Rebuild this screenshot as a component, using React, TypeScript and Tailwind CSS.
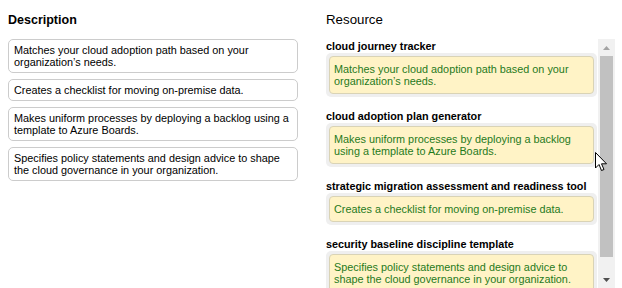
const descriptions = [
  "Matches your cloud adoption path based on your organization’s needs.",
  "Creates a checklist for moving on-premise data.",
  "Makes uniform processes by deploying a backlog using a template to Azure Boards.",
  "Specifies policy statements and design advice to shape the cloud governance in your organization.",
];

const resources = [
  { name: "cloud journey tracker", text: "Matches your cloud adoption path based on your organization’s needs." },
  { name: "cloud adoption plan generator", text: "Makes uniform processes by deploying a backlog using a template to Azure Boards." },
  { name: "strategic migration assessment and readiness tool", text: "Creates a checklist for moving on-premise data." },
  { name: "security baseline discipline template", text: "Specifies policy statements and design advice to shape the cloud governance in your organization." },
];

function Scrollbar() {
  return (
    <div className="w-[17px] shrink-0 bg-[#f1f1f1] flex flex-col items-center">
      <div className="h-[17px] flex items-center justify-center">
        <svg width="7" height="4" viewBox="0 0 7 4">
          <path d="M0 4 L3.5 0 L7 4 Z" fill="#a3a3a3" />
        </svg>
      </div>
      <div className="w-[13px] h-[201px] bg-[#c1c1c1]" />
      <div className="flex-1" />
      <div className="h-[17px] flex items-center justify-center">
        <svg width="7" height="4" viewBox="0 0 7 4">
          <path d="M0 0 L3.5 4 L7 0 Z" fill="#505050" />
        </svg>
      </div>
    </div>
  );
}

export default function App() {
  return (
    <div
      className="relative h-[288px] w-[622px] overflow-hidden bg-white text-black"
      style={{ fontFamily: '"Liberation Sans", Arial, sans-serif' }}
    >
      <div className="grid grid-cols-[290px_289px] gap-x-[28px] pl-[8px] pt-[12px]">
        {/* Description column */}
        <div>
          <h2 className="text-[12.5px] font-bold leading-[16px] mb-[11px]">Description</h2>
          <div className="flex flex-col gap-[6px]">
            {descriptions.map((d) => (
              <div
                key={d}
                className="border border-[#cccccc] rounded-[5px] px-[5px] py-[4px] text-[10.85px] leading-[12px]"
              >
                {d}
              </div>
            ))}
          </div>
        </div>

        {/* Resource column */}
        <div>
          <h2 className="text-[13.3px] leading-[16px] mb-[11px]">Resource</h2>
          <div className="flex h-[249px]">
            <div className="w-[272px] overflow-hidden">
              {resources.map((r, i) => (
                <div key={r.name} className={i === 0 ? "" : "mt-[12px]"}>
                  <div className="text-[10.8px] font-bold leading-[14px]">{r.name}</div>
                  <div className="bg-[#efefef] rounded-[5px] p-[3px]">
                    <div className="bg-[#fff3c6] border border-[#d9d3b6] rounded-[4px] px-[4px] py-[6px] text-[10.85px] leading-[12px] text-[#1f7a1c]">
                      {r.text}
                    </div>
                  </div>
                </div>
              ))}
            </div>
            <div className="w-[1px]" />
            <Scrollbar />
          </div>
        </div>
      </div>

      {/* mouse pointer */}
      <svg
        className="absolute left-[595px] top-[152px]"
        width="13"
        height="20"
        viewBox="0 0 13 20"
      >
        <path
          d="M0.5 0.5 L0.5 16 L4 12.5 L6.5 18.5 L9 17.5 L6.5 11.8 L11.5 11.8 Z"
          fill="#ffffff"
          stroke="#000000"
          strokeWidth="1"
          strokeLinejoin="round"
        />
      </svg>
    </div>
  );
}
